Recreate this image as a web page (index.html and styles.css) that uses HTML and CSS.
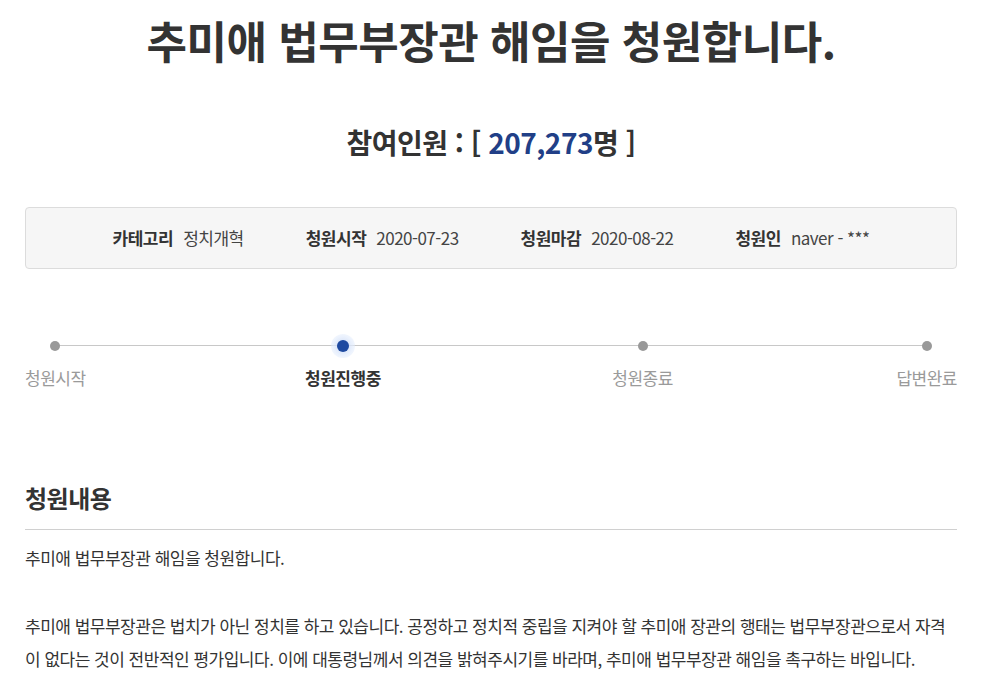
FILE: index.html
```html
<!DOCTYPE html>
<html lang="ko">
<head>
<meta charset="utf-8">
<title>청원</title>
<link rel="stylesheet" href="styles.css">
</head>
<body>
<div class="page">
  <h1 class="title">추미애 법무부장관 해임을 청원합니다.</h1>
  <h2 class="count">참여인원 : [ <span class="num">207,273</span>명 ]</h2>
  <ul class="info">
    <li><strong>카테고리</strong><span>정치개혁</span></li>
    <li><strong>청원시작</strong><span>2020-07-23</span></li>
    <li><strong>청원마감</strong><span>2020-08-22</span></li>
    <li><strong>청원인</strong><span>naver - ***</span></li>
  </ul>
  <ol class="progress">
    <li><span class="dot"></span><span class="label">청원시작</span></li>
    <li class="on"><span class="dot"></span><span class="label">청원진행중</span></li>
    <li class="third"><span class="dot"></span><span class="label">청원종료</span></li>
    <li><span class="dot"></span><span class="label">답변완료</span></li>
  </ol>
  <h3 class="section">청원내용</h3>
  <div class="content">
    <p>추미애 법무부장관 해임을 청원합니다.</p>
    <p class="para">추미애 법무부장관은 법치가 아닌 정치를 하고 있습니다. 공정하고 정치적 중립을 지켜야 할 추미애 장관의 행태는 법무부장관으로서 자격이 없다는 것이 전반적인 평가입니다. 이에 대통령님께서 의견을 밝혀주시기를 바라며, 추미애 법무부장관 해임을 촉구하는 바입니다.</p>
  </div>
</div>
</body>
</html>
```

FILE: styles.css
```css
html, body {
  margin: 0;
  padding: 0;
  background: #fff;
}
body {
  font-family: "Noto Sans CJK KR", "Noto Sans", sans-serif;
  color: #333;
  letter-spacing: -0.5px;
}
.page {
  width: 932px;
  margin-left: 25px;
}
.title {
  margin: 0;
  padding-top: 13px;
  font-size: 44px;
  line-height: 54px;
  font-weight: 700;
  text-align: center;
  color: #333;
}
.count {
  margin: 57px 0 0;
  font-size: 28px;
  line-height: 36px;
  font-weight: 700;
  text-align: center;
  color: #333;
}
.count .num {
  color: #213f87;
}
.info {
  list-style: none;
  margin: 47px 0 0;
  padding: 0;
  height: 60px;
  border: 1px solid #dcdcdc;
  border-radius: 4px;
  background: #f6f6f6;
  display: flex;
  justify-content: center;
  align-items: center;
  gap: 62px;
  font-size: 17px;
  line-height: 24px;
}
.info li {
  display: flex;
  gap: 10px;
}
.info strong {
  font-weight: 700;
  color: #333;
}
.info span {
  color: #444;
}
.progress {
  list-style: none;
  margin: 65px 0 0;
  padding: 0;
  display: flex;
  justify-content: space-between;
  position: relative;
}
.progress::before {
  content: "";
  position: absolute;
  left: 30px;
  right: 30px;
  top: 11px;
  height: 1px;
  background: #c8c8c8;
}
.progress li {
  display: flex;
  flex-direction: column;
  align-items: center;
  position: relative;
  gap: 8px;
}
.progress li.on {
  margin-left: -8px;
}
.progress li.third {
  margin-left: 4px;
  margin-right: -4px;
}
.dot {
  width: 24px;
  height: 24px;
  display: flex;
  align-items: center;
  justify-content: center;
}
.dot::after {
  content: "";
  width: 10px;
  height: 10px;
  border-radius: 50%;
  background: #999;
}
.on .dot {
  border-radius: 50%;
  background: radial-gradient(circle, rgba(200,215,245,0.9) 0%, rgba(225,235,252,0.7) 55%, rgba(255,255,255,0) 100%);
}
.on .dot::after {
  width: 12px;
  height: 12px;
  background: #1f4aa0;
}
.label {
  font-size: 17px;
  line-height: 24px;
  color: #9a9a9a;
}
.on .label {
  color: #333;
  font-weight: 700;
}
.section {
  margin: 91px 0 0;
  padding-bottom: 14px;
  border-bottom: 1px solid #d0d0d0;
  font-size: 24px;
  line-height: 34px;
  font-weight: 700;
  color: #333;
}
.content {
  font-size: 17px;
  line-height: 33px;
  color: #333;
}
.content p {
  margin: 11px 0 0;
}
.content .para {
  margin-top: 35px;
}
```
